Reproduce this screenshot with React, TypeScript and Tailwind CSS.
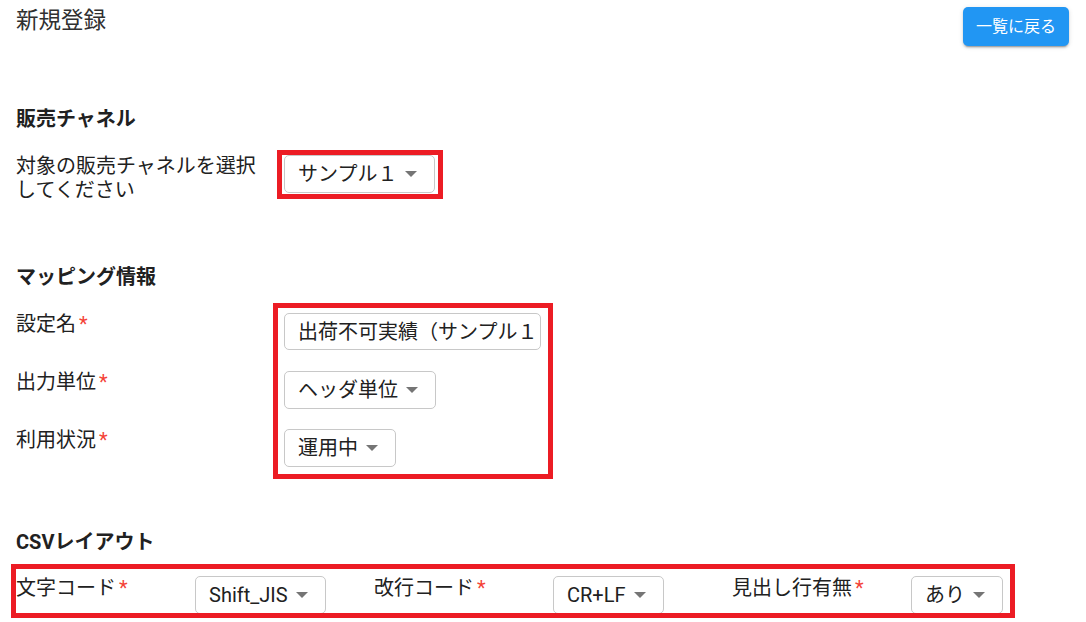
import React from "react";

function Arrow() {
  return (
    <svg width="12" height="6" viewBox="0 0 12 6" className="shrink-0">
      <polygon points="0,0 12,0 6,6" fill="#757575" />
    </svg>
  );
}

function Select({ value }: { value: string }) {
  return (
    <div className="inline-flex h-[38px] items-center gap-[8px] whitespace-nowrap rounded-[5px] border border-[#c8c8c8] bg-white pl-[13px] pr-[17px] text-[20px] text-[#212121]">
      <span>{value}</span>
      <Arrow />
    </div>
  );
}

function Required() {
  return <span className="ml-[3px] text-[#f44336]">*</span>;
}

function Label({ children, className = "" }: { children: React.ReactNode; className?: string }) {
  return (
    <div className={`text-[20px] leading-[24px] text-[#212121] ${className}`}>
      {children}
    </div>
  );
}

export default function App() {
  return (
    <div className="min-h-screen bg-white px-4 font-['Roboto','Noto_Sans_CJK_JP',sans-serif] text-[#212121]">
      <header className="flex items-start justify-between pt-[7px]">
        <h1 className="text-[22.5px] leading-[26px] text-[#303030]">新規登録</h1>
        <button
          type="button"
          className="mr-px h-[39px] rounded-[5px] bg-[#2196f3] px-[13px] text-[16px] text-white shadow-[0_3px_1px_-2px_rgba(0,0,0,0.2),0_2px_2px_0_rgba(0,0,0,0.14),0_1px_5px_0_rgba(0,0,0,0.12)]"
        >
          一覧に戻る
        </button>
      </header>

      {/* 販売チャネル */}
      <h2 className="mt-[59px] text-[20px] font-bold leading-[28px]">販売チャネル</h2>
      <div className="mt-[17px] flex items-start">
        <Label className="w-[250px] pt-[4px]">対象の販売チャネルを選択してください</Label>
        <div className="ml-[11px] border-[5px] border-[#ec1c24] pb-[1px] pl-[2px] pr-[3px]">
          <Select value="サンプル１" />
        </div>
      </div>

      {/* マッピング情報 */}
      <h2 className="mt-[61px] text-[20px] font-bold leading-[28px]">マッピング情報</h2>
      <div className="mt-[12px] flex items-start">
        <div className="flex w-[257px] flex-col">
          <Label className="mt-[9px]">
            設定名
            <Required />
          </Label>
          <Label className="mt-[34px]">
            出力単位
            <Required />
          </Label>
          <Label className="mt-[34px]">
            利用状況
            <Required />
          </Label>
        </div>
        <div className="flex flex-col items-start border-[5px] border-[#ec1c24] pb-[7px] pl-[6px] pr-[7px] pt-[5px]">
          <div className="flex h-[37px] w-[257px] items-center whitespace-nowrap rounded-[5px] border border-[#c8c8c8] pl-[13px] text-[20px]">
            出荷不可実績（サンプル１
          </div>
          <div className="mt-[21px]">
            <Select value="ヘッダ単位" />
          </div>
          <div className="mt-[20px]">
            <Select value="運用中" />
          </div>
        </div>
      </div>

      {/* CSVレイアウト */}
      <h2 className="mt-[49px] text-[20px] font-bold leading-[28px]">CSVレイアウト</h2>
      <div className="-ml-[5px] mt-[8px] h-[54px] w-[1004px] overflow-hidden border-[5px] border-[#ec1c24]">
        <div className="grid grid-cols-[repeat(6,179px)] items-start pt-[7px]">
          <Label>
            文字コード
            <Required />
          </Label>
          <div>
            <Select value="Shift_JIS" />
          </div>
          <Label>
            改行コード
            <Required />
          </Label>
          <div>
            <Select value="CR+LF" />
          </div>
          <Label>
            見出し行有無
            <Required />
          </Label>
          <div>
            <Select value="あり" />
          </div>
        </div>
      </div>
    </div>
  );
}
